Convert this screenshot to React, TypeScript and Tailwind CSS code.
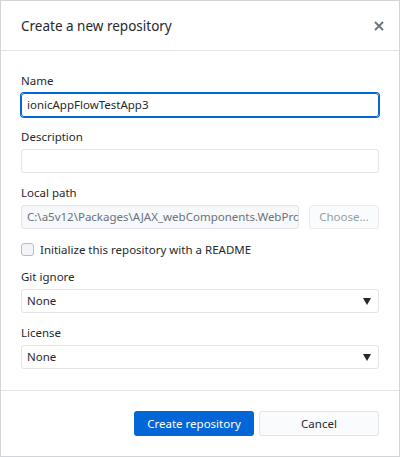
import React from "react";

const font = { fontFamily: '"Noto Sans", "Open Sans", sans-serif' };

function Label({ children }: { children: React.ReactNode }) {
  return <div className="h-[16px] text-[11.5px] leading-[17px] text-[#24292e] mb-[5px]">{children}</div>;
}

function Select() {
  return (
    <div className="h-[24px] w-full rounded-[3px] border border-[#e1e4e8] bg-white flex items-center justify-between pl-[5px] pr-[7px]">
      <span className="text-[11.5px] text-[#24292e]">None</span>
      <svg width="8" height="7" viewBox="0 0 8 7"><path d="M0 0 L8 0 L4 7 Z" fill="#24292e" /></svg>
    </div>
  );
}

export default function App() {
  return (
    <div style={font} className="w-[400px] h-[457px] border border-[#d1d5da] bg-white flex flex-col">
      <div className="h-[50px] shrink-0 border-b border-[#e1e4e8] flex items-center justify-between pl-[20px] pr-[15px]">
        <span className="text-[13.5px] text-[#24292e] pt-[1px]">Create a new repository</span>
        <svg width="10" height="10" viewBox="0 0 10 10">
          <path d="M1 1 L9 9 M9 1 L1 9" stroke="#6a737d" strokeWidth="1.8" />
        </svg>
      </div>
      <div className="flex-1 px-[20px] pt-[21px] flex flex-col">
        <Label>Name</Label>
        <div className="h-[24px] rounded-[3px] border border-[#0366d6] shadow-[0_0_0_1px_#0366d6] flex items-center pl-[5px] text-[11.5px] text-[#24292e]">
          ionicAppFlowTestApp3
        </div>
        <div className="mt-[11px]"><Label>Description</Label></div>
        <div className="h-[24px] rounded-[3px] border border-[#e1e4e8] bg-white"></div>
        <div className="mt-[11px]"><Label>Local path</Label></div>
        <div className="flex gap-[10px]">
          <div className="flex-1 min-w-0 h-[24px] rounded-[3px] border border-[#e1e4e8] bg-[#f6f8fa] flex items-center pl-[5px] overflow-hidden whitespace-nowrap text-[11.5px] text-[#6a737d]">
            C:\a5v12\Packages\AJAX_webComponents.WebPro
          </div>
          <div className="w-[70px] h-[24px] rounded-[3px] border border-[#eaecef] bg-[#fafbfc] flex items-center justify-center text-[11.5px] text-[#959da5]">
            Choose...
          </div>
        </div>
        <div className="mt-[12px] h-[17px] flex items-center gap-[6px]">
          <div className="w-[13px] h-[13px] rounded-[3px] border border-[#b5bcc4] bg-[#f3f4f6]"></div>
          <span className="text-[11.5px] text-[#24292e]">Initialize this repository with a README</span>
        </div>
        <div className="mt-[10px]"><Label>Git ignore</Label></div>
        <Select />
        <div className="mt-[11px]"><Label>License</Label></div>
        <Select />
      </div>
      <div className="h-[66px] shrink-0 border-t border-[#e1e4e8] flex justify-end items-start pt-[20px] pr-[20px] gap-[5px]">
        <div className="w-[120px] h-[25px] rounded-[3px] bg-[#0366d6] flex items-center justify-center text-[11.5px] text-white">
          Create repository
        </div>
        <div className="w-[120px] h-[25px] rounded-[3px] border border-[#e1e4e8] bg-[#fafbfc] flex items-center justify-center text-[11.5px] text-[#24292e]">
          Cancel
        </div>
      </div>
    </div>
  );
}
